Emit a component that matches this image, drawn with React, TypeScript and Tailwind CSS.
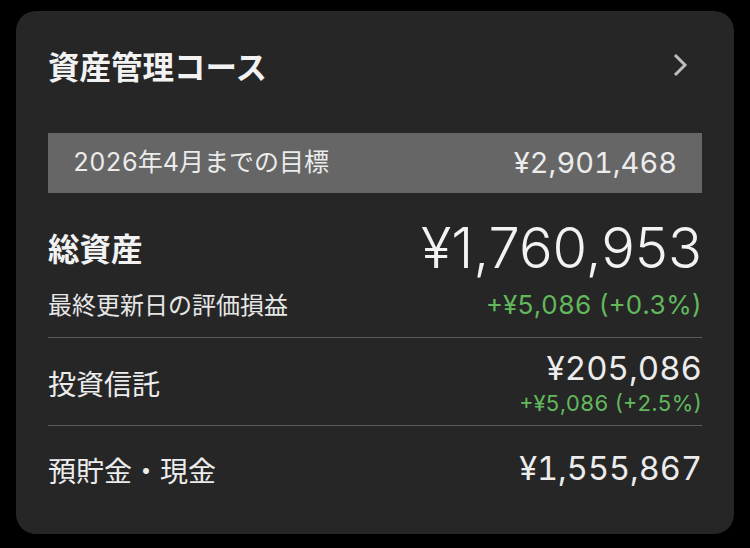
import React from "react";

const jp = "font-['Noto_Sans_CJK_JP',sans-serif]";
const num = "font-['Inter','Noto_Sans_CJK_JP',sans-serif] tabular-nums";

const App = () => {
  return (
    <div className="w-[750px] h-[548px] bg-black pt-[11px] px-4">
      <div className="h-[523px] rounded-[20px] bg-[#262626] px-8 pt-[34px]">
        <div className="flex items-center justify-between h-10">
          <div className={`${jp} text-[31.5px] font-bold text-[#f2f2f2] leading-10`}>
            資産管理コース
          </div>
          <svg width="18" height="26" viewBox="0 0 18 26" className="mr-[13px]">
            <path d="M4 3 L14 13 L4 23" fill="none" stroke="#bdbdbd" strokeWidth="3" />
          </svg>
        </div>

        <div className="mt-[48px] h-[60px] bg-[#666666] flex items-center justify-between px-[25px]">
          <div className={`${num} text-[25px] text-[#ececec]`}>2026年4月までの目標</div>
          <div className={`${num} text-[29px] text-[#ececec]`}>¥2,901,468</div>
        </div>

        <div className="mt-[25px] flex items-center justify-between h-[60px]">
          <div className={`${jp} text-[31.5px] font-bold text-[#f2f2f2]`}>総資産</div>
          <div className="font-['Inter','Noto_Sans_CJK_JP',sans-serif] text-[56px] font-light text-[#f2f2f2] leading-[60px]">
            ¥1,760,953
          </div>
        </div>
        <div className="mt-[11px] flex items-center justify-between h-[30px]">
          <div className={`${jp} text-[24px] text-[#e6e6e6]`}>最終更新日の評価損益</div>
          <div className={`${num} text-[26px] text-[#62b85c]`}>+¥5,086 (+0.3%)</div>
        </div>

        <div className="mt-[18px] border-t border-[#5a5a5a] flex items-center justify-between pt-3 pb-[9px]">
          <div className={`${jp} text-[28px] text-[#ececec]`}>投資信託</div>
          <div className="flex flex-col items-end gap-1">
            <div className={`${num} text-[33px] text-[#ececec] leading-9`}>¥205,086</div>
            <div className={`${num} text-[22px] text-[#62b85c] leading-[26px]`}>+¥5,086 (+2.5%)</div>
          </div>
        </div>

        <div className="border-t border-[#5a5a5a] flex items-center justify-between h-[88px]">
          <div className={`${jp} text-[28px] text-[#ececec]`}>預貯金・現金</div>
          <div className={`${num} text-[32.5px] text-[#ececec]`}>¥1,555,867</div>
        </div>
      </div>
    </div>
  );
};

export default App;
